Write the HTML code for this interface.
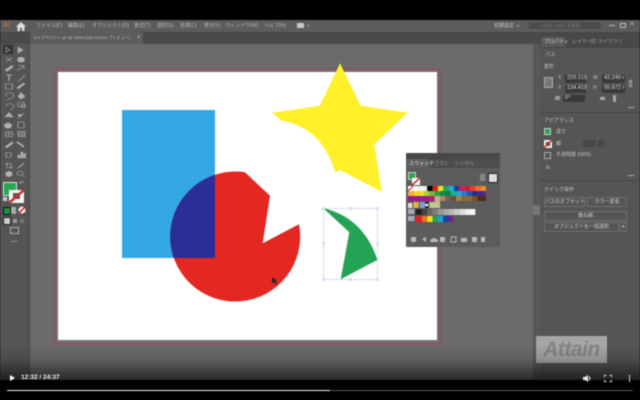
<!DOCTYPE html>
<html><head><meta charset="utf-8">
<style>
html,body{margin:0;padding:0;background:#000}
#r{position:relative;width:640px;height:400px;overflow:hidden;background:#000;font-family:"Liberation Sans","Noto Sans CJK JP",sans-serif;filter:blur(.45px)}
.a{position:absolute}
.t{position:absolute;white-space:nowrap;color:#c4c4c4;font-size:5.5px;line-height:8px}
.b{position:absolute;border:1px solid #707070;box-sizing:border-box;color:#ccc;font-size:5px;text-align:center;line-height:8px;white-space:nowrap}
.f{position:absolute;background:#3a3a3a;color:#ddd;font-size:5.5px;line-height:7px;white-space:nowrap;padding-left:2px;box-sizing:border-box}
</style></head><body><div id="r">
<div class="a" style="left:0;top:20px;width:640px;height:12px;background:#5c5c5c"></div>
<div class="a" style="left:0;top:32px;width:640px;height:12px;background:#4b4a4b"></div>
<div class="a" style="left:0;top:44px;width:540px;height:340px;background:#6b6b6b"></div>
<div class="a" style="left:30px;top:32px;width:113px;height:12px;background:#5c5c5c"></div>
<div class="t" style="left:3px;top:21px;color:#b8704c;font-size:7px;line-height:10px;font-weight:bold">Ai</div>
<svg class="a" style="left:16px;top:22px" width="10" height="9" viewBox="0 0 10 9"><path d="M5 0L10 4.500H8.500V9H6V6H4V9H1.500V4.500H0Z" fill="#ddd"/></svg>
<div class="t" style="left:36px;top:22px;font-size:5px;color:#b8b8b8">ファイル(F)</div>
<div class="t" style="left:68px;top:22px;font-size:5px;color:#b8b8b8">編集(E)</div>
<div class="t" style="left:92px;top:22px;font-size:5px;color:#b8b8b8">オブジェクト(O)</div>
<div class="t" style="left:134px;top:22px;font-size:5px;color:#b8b8b8">書式(T)</div>
<div class="t" style="left:157px;top:22px;font-size:5px;color:#b8b8b8">選択(S)</div>
<div class="t" style="left:180px;top:22px;font-size:5px;color:#b8b8b8">効果(C)</div>
<div class="t" style="left:204px;top:22px;font-size:5px;color:#b8b8b8">表示(V)</div>
<div class="t" style="left:225px;top:22px;font-size:5px;color:#b8b8b8">ウィンドウ(W)</div>
<div class="t" style="left:264px;top:22px;font-size:5px;color:#b8b8b8">ヘルプ(H)</div>
<div class="a" style="left:297px;top:23px;width:7px;height:5px;background:#c8c8c8"></div>
<div class="t" style="left:307px;top:22px;font-size:4px">▾</div>
<div class="t" style="left:33px;top:34px;font-size:4px;letter-spacing:.02px">ライブペイント.ai* @ 100% (CMYK/GPU プレビュー)</div>
<div class="t" style="left:137px;top:34px;font-size:6px">×</div>
<div class="t" style="left:494px;top:22px;font-size:5px">初期設定</div>
<div class="t" style="left:517px;top:22px;font-size:4px">▾</div>
<div class="a" style="left:529px;top:22px;width:72px;height:7px;background:#4c4c4c"></div>
<div class="t" style="left:540px;top:22px;font-size:4.500px;color:#7c7c7c">Adobe Stock を検索</div>
<div class="a" style="left:609px;top:25px;width:6px;height:1px;background:#bbb"></div>
<div class="a" style="left:620px;top:23px;width:6px;height:5px;border:1px solid #bbb;box-sizing:border-box"></div>
<div class="t" style="left:630px;top:21px;font-size:7px">×</div>

<!-- toolbar -->
<div class="a" style="left:0;top:44px;width:30px;height:340px;background:#555"></div>
<div class="a" style="left:29px;top:44px;width:1px;height:340px;background:#474747"></div>
<div class="a" style="left:3px;top:45px;width:10px;height:9px;background:#333"></div>
<svg class="a" style="left:0;top:45px" width="30" height="132" viewBox="0 0 30 180" preserveAspectRatio="none" fill="#b0b0b0" stroke="#b0b0b0" stroke-width=".7">
<path d="M6 3L6 10L10 7Z" fill="none"/><path d="M18 3V11L23 7Z"/>
<path d="M6 17L12 23M12 17L6 23" fill="none"/><circle cx="21" cy="20" r="3.500"/>
<path d="M5 34L12 28L13 30L7 36Z"/><path d="M17 35L24 28M18 28H24V33" fill="none"/>
<path d="M6 41H12M9 41V49" fill="none" stroke-width="1.200"/><path d="M18 50L25 41" fill="none"/>
<rect x="5.500" y="53" width="7" height="7" fill="none"/><path d="M18 60L25 53L23 52L17 58Z"/>
<path d="M6 70A4 4 0 1 1 12 72L7 75" fill="none"/><path d="M18 70L21 65L25 70L21 74Z"/>
<path d="M6 83A4 4 0 1 1 10 88" fill="none"/><rect x="18" y="78" width="6" height="6" fill="none"/><rect x="21" y="81" width="4" height="4" fill="none"/>
<path d="M5 98L9 92L13 98Z"/><path d="M18 100L24 93" fill="none"/><circle cx="20" cy="96" r="1.500"/>
<circle cx="8" cy="110" r="3.500"/><rect x="18" y="105" width="6" height="8" fill="none"/>
<rect x="5.500" y="118" width="7" height="7" fill="none"/><path d="M9 118V125M5.500 121H12.500" fill="none"/><rect x="18" y="118" width="7" height="7" fill="#777"/>
<path d="M5 139L12 132L13 134L7 140Z"/><path d="M17 132L24 139" stroke-width="2"/>
<path d="M6 147H11V153H6Z" fill="none"/><rect x="18" y="150" width="2" height="4"/><rect x="21" y="146" width="2" height="8"/><rect x="24" y="148" width="1.500" height="6"/>
<path d="M7 160V167H13M5 162H11V169" fill="none"/><path d="M18 168L24 161" stroke-width="1.200"/>
<path d="M6 178V174L9 172L12 174V178L9 180Z"/><circle cx="20" cy="175" r="3" fill="none"/><path d="M22 177L25 180" fill="none"/>
</svg>
<div class="a" style="left:3px;top:182px;width:14px;height:14px;background:#25a850;border:1px solid #ddd;box-sizing:border-box"></div>
<svg class="a" style="left:9px;top:190px" width="15" height="13" viewBox="0 0 15 13"><rect x="0" y="0" width="15" height="13" fill="#f4f4f4"/><rect x="4" y="3" width="7" height="6" fill="#5a5a5a"/><path d="M0 13L15 0" stroke="#c83030" stroke-width="2.500"/></svg>
<div class="a" style="left:3px;top:197px;width:4px;height:4px;background:#ccc"></div>
<div class="t" style="left:19px;top:180px;font-size:6px">↶</div>
<div class="a" style="left:3px;top:207px;width:6px;height:6px;background:#1f8f42;border:1px solid #111"></div>
<div class="a" style="left:11px;top:207px;width:5px;height:7px;background:#aaa"></div>
<svg class="a" style="left:18px;top:206px" width="8" height="8"><circle cx="4" cy="4" r="3.500" fill="#eee"/><path d="M1 7L7 1" stroke="#d02020" stroke-width="1.500"/></svg>
<div class="a" style="left:3px;top:217px;width:6px;height:6px;background:#ccc;border:1px solid #222"></div>
<div class="a" style="left:13px;top:219px;width:4px;height:4px;background:#999"></div>
<div class="a" style="left:20px;top:219px;width:4px;height:4px;background:#777"></div>
<div class="a" style="left:10px;top:227px;width:9px;height:7px;border:1px solid #aaa;box-sizing:border-box"></div>
<div class="t" style="left:11px;top:236px;font-size:8px;color:#aaa;font-weight:bold">...</div>

<!-- artboard -->
<div class="a" style="left:54px;top:68px;width:387px;height:277px;border:2px solid #875660;box-sizing:border-box;background:#727070"></div>
<div class="a" style="left:58px;top:72px;width:379px;height:268px;background:#fff"></div>
<svg class="a" style="left:0;top:0" width="640" height="400">
<rect x="122" y="110" width="93" height="148" fill="#33a8e4"/>
<path d="M245 172.300L270 195.700L262.700 243.300L299 224.300A65 65 0 1 1 245 172.300Z" fill="#e42821"/>
<clipPath id="c"><rect x="122" y="110" width="93" height="148"/></clipPath>
<path clip-path="url(#c)" d="M245 172.300L270 195.700L262.700 243.300L299 224.300A65 65 0 1 1 245 172.300Z" fill="#2a2e96"/>
<path d="M340 63.300L360.700 105.700L407.700 112.700L374.300 144.300L381.700 191.700L340 170L335.300 172.300C327 145 310 125 281.700 120.700L272.300 112.700L320 105.700Z" fill="#fff02a"/>
<path d="M323.300 208.300C350 214 369 233 377.300 260L340.700 279.300L349.300 232.300Z" fill="#24a355"/>
<rect x="323.500" y="208.500" width="54" height="71" fill="none" stroke="#c4d3ea" stroke-width=".7"/>
<g fill="#d2dff2"><rect x="322" y="207" width="3" height="3"/><rect x="349" y="207" width="3" height="3"/><rect x="376" y="207" width="3" height="3"/><rect x="322" y="242" width="3" height="3"/><rect x="376" y="242" width="3" height="3"/><rect x="322" y="278" width="3" height="3"/><rect x="349" y="278" width="3" height="3"/><rect x="376" y="278" width="3" height="3"/></g>
<path d="M272 277V284L274 282L276 285L277 284L275.500 281.500L277 281Z" fill="#222"/>
</svg>

<!-- swatches panel -->
<div class="a" style="left:406px;top:153px;width:94px;height:94px;background:#5c5c5c;border-radius:1px"></div>
<div class="a" style="left:406px;top:153px;width:94px;height:6px;background:#484848"></div>
<div class="a" style="left:406px;top:159px;width:23px;height:9px;background:#5f5f5f"></div>
<div class="a" style="left:429px;top:159px;width:71px;height:9px;background:#4d4d4d"></div>
<div class="t" style="left:409px;top:160px;font-size:5px;color:#ddd">スウォッチ</div>
<div class="t" style="left:434px;top:160px;font-size:5px;color:#999;word-spacing:4px">ブラシ シンボル</div>
<div class="a" style="left:408px;top:172px;width:8px;height:8px;background:#25a850;border:1px solid #ccc;box-sizing:border-box"></div>
<svg class="a" style="left:412px;top:178px" width="8" height="7"><rect width="8" height="7" fill="#fff"/><path d="M0 7L8 0" stroke="#d02020" stroke-width="1.500"/></svg>
<div class="a" style="left:480px;top:174px;width:5px;height:7px;background:#888"></div>
<div class="a" style="left:488px;top:173px;width:8px;height:8px;background:#ddd;border:1px solid #222"></div>
<svg class="a" style="left:408px;top:185px" width="78" height="37" viewBox="0 0 73 37" preserveAspectRatio="none">
<rect x="0" y="1" width="5" height="5" fill="#fff"/><path d="M0 6L5 1" stroke="#d02020"/>
<rect x="5" y="1" width="5" height="5" fill="#fff"/><rect x="10" y="1" width="6" height="5" fill="#f4f4f4"/><rect x="16" y="1" width="2" height="5" fill="#eee"/>
<rect x="18" y="1" width="5" height="5" fill="#000"/><rect x="23" y="1" width="5" height="5" fill="#e02020"/><rect x="28" y="1" width="5" height="5" fill="#f0e020"/><rect x="33" y="1" width="5" height="5" fill="#24a355"/><rect x="38" y="1" width="5" height="5" fill="#20b0d8"/><rect x="43" y="1" width="5" height="5" fill="#1a40a0"/><rect x="48" y="1" width="5" height="5" fill="#d02060"/><rect x="53" y="1" width="5" height="5" fill="#c82030"/><rect x="58" y="1" width="5" height="5" fill="#e84030"/><rect x="63" y="1" width="5" height="5" fill="#ee7020"/><rect x="68" y="1" width="5" height="5" fill="#f09020"/>
<rect x="0" y="6" width="5" height="5" fill="#f0b040"/><rect x="5" y="6" width="5" height="5" fill="#f8d020"/><rect x="10" y="6" width="5" height="5" fill="#e8e020"/><rect x="15" y="6" width="5" height="5" fill="#b0d030"/><rect x="20" y="6" width="5" height="5" fill="#70b840"/><rect x="25" y="6" width="5" height="5" fill="#30a040"/><rect x="30" y="6" width="5" height="5" fill="#109040"/><rect x="35" y="6" width="5" height="5" fill="#108050"/><rect x="40" y="6" width="5" height="5" fill="#20b090"/><rect x="45" y="6" width="5" height="5" fill="#20a8d0"/><rect x="50" y="6" width="5" height="5" fill="#2080d0"/><rect x="55" y="6" width="5" height="5" fill="#2850b0"/><rect x="60" y="6" width="5" height="5" fill="#203090"/><rect x="65" y="6" width="5" height="5" fill="#402890"/><rect x="70" y="6" width="3" height="5" fill="#602090"/>
<rect x="0" y="11" width="20" height="5" fill="#a01890"/><rect x="20" y="11" width="5" height="5" fill="#b02070"/><rect x="25" y="11" width="5" height="5" fill="#c8b088"/><rect x="30" y="11" width="5" height="5" fill="#a88868"/><rect x="35" y="11" width="5" height="5" fill="#786050"/><rect x="40" y="11" width="5" height="5" fill="#605040"/><rect x="45" y="11" width="5" height="5" fill="#a88040"/><rect x="50" y="11" width="10" height="5" fill="#906830"/><rect x="60" y="11" width="5" height="5" fill="#805020"/><rect x="65" y="11" width="8" height="5" fill="#502c10"/>
<rect x="0" y="18" width="4" height="5" fill="#ddd"/><rect x="5" y="17" width="5" height="6" fill="#e8b040"/><rect x="11" y="17" width="5" height="6" fill="#80a0d0"/><rect x="16" y="17" width="3" height="6" fill="#111"/><circle cx="17.500" cy="20" r="1.500" fill="#eee"/><rect x="20" y="17" width="10" height="6" fill="#c0c890"/><rect x="25" y="12" width="5" height="6" fill="#c0b090"/>
<rect x="0" y="24" width="6" height="5" fill="#aab"/><rect x="7" y="24" width="6" height="6" fill="#222"/><rect x="13" y="24" width="5" height="6" fill="#444"/><rect x="18" y="24" width="5" height="6" fill="#666"/><rect x="23" y="24" width="5" height="6" fill="#808080"/><rect x="28" y="24" width="5" height="6" fill="#999"/><rect x="33" y="24" width="5" height="6" fill="#aaa"/><rect x="38" y="24" width="5" height="6" fill="#bbb"/><rect x="43" y="24" width="5" height="6" fill="#ccc"/><rect x="48" y="24" width="5" height="6" fill="#ddd"/><rect x="53" y="24" width="5" height="6" fill="#eee"/><rect x="58" y="24" width="5" height="6" fill="#f8f8f8"/>
<rect x="0" y="31" width="6" height="5" fill="#aab"/><rect x="7" y="31" width="6" height="6" fill="#e02020"/><rect x="13" y="31" width="5" height="6" fill="#ee7020"/><rect x="18" y="31" width="5" height="6" fill="#f0e020"/><rect x="23" y="31" width="5" height="6" fill="#24a355"/><rect x="28" y="31" width="5" height="6" fill="#20a0d8"/><rect x="33" y="31" width="5" height="6" fill="#1a40a0"/><rect x="38" y="31" width="4" height="6" fill="#702090"/>
</svg>
<svg class="a" style="left:409px;top:236px" width="80" height="8" fill="#b8b8b8"><rect x="2" y="1" width="5" height="5"/><path d="M13 3L17 1V6Z"/><path d="M21 6A4 4 0 0 1 29 6Z"/><rect x="31" y="1" width="5" height="5"/><rect x="42" y="1" width="5" height="5" fill="none" stroke="#b8b8b8"/><rect x="52" y="2" width="6" height="4"/><rect x="63" y="1" width="5" height="5"/><rect x="72" y="1" width="4" height="5"/></svg>

<!-- right scroll / panel -->
<div class="a" style="left:533px;top:44px;width:7px;height:340px;background:#585858"></div>
<div class="a" style="left:533px;top:205px;width:7px;height:10px;background:#777"></div>
<div class="a" style="left:540px;top:44px;width:100px;height:340px;background:#555"></div>
<div class="a" style="left:540px;top:32px;width:100px;height:16px;background:#484848"></div>
<div class="a" style="left:541px;top:37px;width:24px;height:10px;background:#5a5a5a"></div>
<div class="t" style="left:544px;top:38px;font-size:5px;color:#ddd">プロパティ</div>
<div class="t" style="left:572px;top:38px;font-size:5px;color:#999">レイヤー</div>
<div class="t" style="left:590px;top:38px;font-size:5px;color:#999">3D ライブラリ</div>
<div class="t" style="left:545px;top:51px;font-size:5px">パス</div>
<div class="t" style="left:544px;top:63px;font-size:5px">変形</div>
<div class="a" style="left:544px;top:77px;width:9px;height:11px;border:1px solid #aaa;box-sizing:border-box;background:#777"></div>
<div class="t" style="left:558px;top:74px;font-size:5px">X</div><div class="t" style="left:558px;top:84px;font-size:5px">Y</div>
<div class="t" style="left:593px;top:74px;font-size:5px">W</div><div class="t" style="left:593px;top:84px;font-size:5px">H</div>
<div class="f" style="left:565px;top:75px;width:21px;height:8px">229.215</div>
<div class="f" style="left:565px;top:85px;width:21px;height:8px">134.419</div>
<div class="f" style="left:602px;top:75px;width:23px;height:8px">42.249 r</div>
<div class="f" style="left:602px;top:85px;width:23px;height:8px">55.872 r</div>
<div class="a" style="left:629px;top:80px;width:3px;height:7px;border:1px solid #aaa;box-sizing:border-box"></div>
<div class="f" style="left:563px;top:95px;width:22px;height:7px">0°</div>
<div class="a" style="left:555px;top:96px;width:5px;height:4px;background:#999"></div>
<div class="a" style="left:600px;top:97px;width:5px;height:3px;background:#aaa"></div>
<div class="a" style="left:613px;top:95px;width:3px;height:7px;background:#aaa"></div>
<div class="a" style="left:628px;top:107px;width:6px;height:1px;background:#aaa"></div>
<div class="a" style="left:540px;top:112px;width:100px;height:1px;background:#454545"></div>
<div class="t" style="left:544px;top:117px;font-size:5px">アピアランス</div>
<div class="a" style="left:544px;top:128px;width:7px;height:7px;background:#25a850;border:1px solid #ccc;box-sizing:border-box"></div>
<div class="t" style="left:556px;top:128px;font-size:5px">塗り</div>
<svg class="a" style="left:544px;top:140px" width="8" height="8"><rect width="8" height="8" fill="#eee"/><rect x="2" y="2" width="4" height="4" fill="#555"/><path d="M0 8L8 0" stroke="#d02020" stroke-width="1.500"/></svg>
<div class="t" style="left:556px;top:140px;font-size:5px">線</div>
<div class="a" style="left:583px;top:140px;width:13px;height:7px;background:#484848"></div>
<div class="a" style="left:598px;top:140px;width:6px;height:7px;background:#484848"></div>
<div class="a" style="left:544px;top:152px;width:7px;height:7px;border:1px solid #aaa;box-sizing:border-box"></div>
<div class="t" style="left:556px;top:151px;font-size:5px">不透明度</div>
<div class="t" style="left:577px;top:151px;font-size:5.500px">100%</div>
<div class="t" style="left:546px;top:164px;font-size:5px">fx.</div>
<div class="a" style="left:628px;top:175px;width:6px;height:1px;background:#aaa"></div>
<div class="a" style="left:540px;top:180px;width:100px;height:1px;background:#454545"></div>
<div class="t" style="left:544px;top:186px;font-size:5px">クイック操作</div>
<div class="b" style="left:544px;top:197px;width:41px;height:10px">パスのオフセット</div>
<div class="b" style="left:587px;top:197px;width:40px;height:10px">カラー変更</div>
<div class="b" style="left:544px;top:211px;width:83px;height:10px">重ね順</div>
<div class="b" style="left:544px;top:222px;width:75px;height:10px">オブジェクトを一括選択</div>
<div class="b" style="left:620px;top:222px;width:7px;height:10px">▾</div>

<!-- watermark -->
<div class="a" style="left:536px;top:336px;width:71px;height:27px;background:#a6a6a6;color:#858585;font-size:21px;line-height:27px;font-weight:bold;font-style:italic;text-align:center;letter-spacing:-.5px;overflow:hidden">Attain</div>

<!-- video controls -->
<div class="a" style="left:0;top:345px;width:640px;height:35px;background:linear-gradient(rgba(0,0,0,0),rgba(0,0,0,.12) 40%,rgba(0,0,0,.6) 100%)"></div>
<div class="a" style="left:0;top:380px;width:640px;height:20px;background:#000"></div>
<svg class="a" style="left:9px;top:374px" width="6" height="8"><path d="M1 1L6 4L1 7Z" fill="#fff"/></svg>
<div class="t" style="left:21px;top:373px;font-size:6.500px;line-height:10px;color:#eee;font-weight:bold">12:32 / 24:37</div>
<div class="a" style="left:7px;top:389.500px;width:626px;height:1.500px;background:#555"></div>
<div class="a" style="left:7px;top:389.500px;width:323px;height:1.500px;background:#eee"></div>
<svg class="a" style="left:582px;top:374px" width="10" height="9"><path d="M1 3H3L6 1V8L3 6H1Z" fill="#eee"/><path d="M7 2.500Q9 4.500 7 6.500" stroke="#eee" fill="none"/></svg>
<svg class="a" style="left:604px;top:375px" width="8" height="7" fill="none" stroke="#eee"><path d="M0 2.500V.5H2.500M5.500 .5H8V2.500M0 4.500V6.500H2.500M5.500 6.500H8V4.500"/></svg>
<div class="a" style="left:628.500px;top:375px;width:1.500px;height:1.500px;background:#eee;box-shadow:0 2.500px 0 #eee,0 5px 0 #eee"></div>
</div></body></html>
